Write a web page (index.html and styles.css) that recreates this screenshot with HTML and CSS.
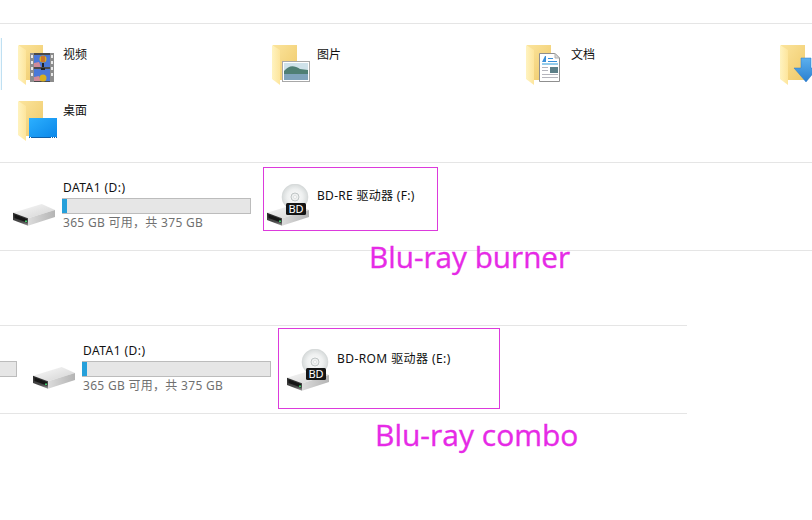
FILE: index.html
```html
<!DOCTYPE html>
<html lang="zh-CN">
<head>
<meta charset="utf-8">
<title>Drives</title>
<link rel="stylesheet" href="styles.css">
</head>
<body>
<svg class="defs" width="0" height="0" aria-hidden="true">
  <defs>
    <linearGradient id="fback" x1="0" y1="0" x2="1" y2="1"><stop offset="0" stop-color="#fbe49c"/><stop offset="1" stop-color="#efc969"/></linearGradient>
    <linearGradient id="fflap" x1="0" y1="0" x2="1" y2="0"><stop offset="0" stop-color="#fff3c0"/><stop offset="1" stop-color="#fde59c"/></linearGradient>
    <linearGradient id="top" x1="0" y1="0" x2="1" y2="1"><stop offset="0" stop-color="#fafafa"/><stop offset="1" stop-color="#d2d2d2"/></linearGradient>
    <linearGradient id="side" x1="0" y1="0" x2="1" y2="0"><stop offset="0" stop-color="#dcdcdc"/><stop offset="1" stop-color="#b4b4b4"/></linearGradient>
    <linearGradient id="panel" x1="0" y1="0" x2="0" y2="1"><stop offset="0" stop-color="#2a2a2a"/><stop offset=".7" stop-color="#4a4a4a"/><stop offset="1" stop-color="#9a9a9a"/></linearGradient>
    <linearGradient id="sky" x1="0" y1="0" x2="1" y2="1"><stop offset="0" stop-color="#2cb0ff"/><stop offset="1" stop-color="#0a86e8"/></linearGradient>
    <radialGradient id="disc"><stop offset="0" stop-color="#fdfdfd"/><stop offset=".6" stop-color="#eef0f0"/><stop offset="1" stop-color="#d6dada"/></radialGradient>
    <linearGradient id="arrow" x1="0" y1="0" x2="0" y2="1"><stop offset="0" stop-color="#5cb0ee"/><stop offset="1" stop-color="#2a7fd0"/></linearGradient>
    <symbol id="folder" viewBox="0 0 44 44">
      <path d="M1 1H25V36H1Z" fill="url(#fback)"/>
      <path d="M0 1L8 6V41L0 35Z" fill="url(#fflap)"/>
    </symbol>
    <symbol id="drive" viewBox="0 0 44 24">
      <path d="M0 9.700L28.700 1L42 7L15 15.300Z" fill="url(#top)"/>
      <path d="M15 15.300L42 7V14L15 22.700Z" fill="url(#side)"/>
      <path d="M0 9.700L15 15.300V22.700L0 17Z" fill="url(#panel)"/>
      <path d="M1.500 11.500L14 16V19.500L1.500 15Z" fill="#161616"/>
      <rect x="12" y="17.500" width="2" height="1.500" fill="#3fd06a"/>
    </symbol>
  </defs>
</svg>

<main class="page">
  <div class="spacer-top"></div>

  <section class="folders">
    <span class="sliver"></span>
    <div class="tile">
      <svg class="ficon" viewBox="0 0 44 44">
        <use href="#folder" width="44" height="44"/>
        <rect x="12" y="9" width="24" height="29" fill="#4a4a4a"/>
        <rect x="12" y="9" width="4" height="29" fill="#8c8c8c"/>
        <rect x="32" y="9" width="4" height="29" fill="#8c8c8c"/>
        <path d="M13 11h2v3h-2zM13 17h2v3h-2zM13 23h2v3h-2zM13 29h2v3h-2zM33 11h2v3h-2zM33 17h2v3h-2zM33 23h2v3h-2zM33 29h2v3h-2z" fill="#e8e8e8"/>
        <rect x="16" y="11" width="16" height="12" fill="#4a78d8"/>
        <rect x="16" y="25" width="16" height="12" fill="#4a78d8"/>
        <path d="M16 19l5-1 2 5h-7zM16 33l5-1 2 5h-7z" fill="#d08a9a"/>
        <circle cx="25" cy="15" r="3.500" fill="#d8b020"/>
        <path d="M23.500 12h1v6h-1zM25.500 12h1v6h-1z" fill="#c03a3a"/>
        <path d="M24 19h2v4h-2zM23 24h4v2h-4z" fill="#222"/>
        <circle cx="25" cy="34" r="3.500" fill="#d8b020"/>
      </svg>
      <span class="label">视频</span>
    </div>
    <div class="tile">
      <svg class="ficon" viewBox="0 0 44 44">
        <use href="#folder" width="44" height="44"/>
        <rect x="10.500" y="17.500" width="27" height="20" fill="#fff" stroke="#a8a8a8"/>
        <rect x="12" y="19" width="24" height="17" fill="#cfe2ea"/>
        <path d="M12 27C17 21 22 21 28 25L36 26V30H12Z" fill="#4f7f74"/>
        <rect x="12" y="30" width="24" height="6" fill="#7fa3bb"/>
      </svg>
      <span class="label">图片</span>
    </div>
    <div class="tile">
      <svg class="ficon" viewBox="0 0 44 44">
        <use href="#folder" width="44" height="44"/>
        <path d="M13.500 9.500H29L33.500 14V37.500H13.500Z" fill="#fff" stroke="#8f8f8f"/>
        <path d="M29 9.500V14H33.500Z" fill="#dcdcdc" stroke="#b0b0b0"/>
        <path d="M16 18l3-6h1v6zM22 14h5v1h-5zM22 17h9v1h-9z" fill="#3a8fd8"/>
        <rect x="16" y="19.500" width="16" height="1" fill="#2a9ad8"/>
        <rect x="24" y="23" width="8" height="6" fill="#5c7f88"/>
        <path d="M16 23h6v1h-6zM16 26h6v1h-6zM16 30h16v1H16zM16 33h16v1H16z" fill="#b5b5bd"/>
      </svg>
      <span class="label">文档</span>
    </div>
    <div class="tile">
      <svg class="ficon" viewBox="0 0 44 44">
        <use href="#folder" width="44" height="44"/>
        <path d="M21 14H31V24H37.500L26 38L14 24H21Z" fill="url(#arrow)" stroke="#2a78c8" stroke-width=".5"/>
      </svg>
    </div>
    <div class="tile">
      <svg class="ficon" viewBox="0 0 44 44">
        <use href="#folder" width="44" height="44"/>
        <rect x="11" y="18" width="28" height="20" fill="url(#sky)"/>
        <rect x="11" y="37" width="28" height="1" fill="#0f5fa8"/>
        <path d="M12 37h1v1h-1zM33 37h1v1h-1zM35 37h1v1h-1zM37 37h1v1h-1z" fill="#fff"/>
      </svg>
      <span class="label">桌面</span>
    </div>
  </section>

  <section class="drives">
    <div class="drive">
      <svg class="dicon"><use href="#drive" width="44" height="24"/></svg>
      <div class="info">
        <div class="name">DATA1 (D:)</div>
        <div class="bar"><div class="fill"></div></div>
        <div class="size">365 GB 可用，共 375 GB</div>
      </div>
    </div>
    <div class="box box-re">
      <svg class="bdicon" viewBox="0 0 44 44">
        <circle cx="28" cy="13" r="13" fill="url(#disc)" stroke="#cfd3d3" stroke-width=".5"/>
        <circle cx="28" cy="13" r="4" fill="#eef0f0" stroke="#bfc5c5"/>
        <circle cx="28" cy="13" r="1.500" fill="#fff" stroke="#c8cccc" stroke-width=".5"/>
        <use href="#drive" y="19" width="44" height="24"/>
        <rect x="19" y="19" width="20" height="12" rx="1.500" fill="#151515"/>
        <text class="bdtext" x="29" y="29" text-anchor="middle">BD</text>
      </svg>
      <div class="name boxname">BD-RE 驱动器 (F:)</div>
    </div>
  </section>

  <div class="spacer-mid"></div>

  <section class="drives drives-narrow">
    <div class="bar stub"></div>
    <div class="drive">
      <svg class="dicon"><use href="#drive" width="44" height="24"/></svg>
      <div class="info">
        <div class="name">DATA1 (D:)</div>
        <div class="bar"><div class="fill"></div></div>
        <div class="size">365 GB 可用，共 375 GB</div>
      </div>
    </div>
    <div class="box box-rom">
      <svg class="bdicon" viewBox="0 0 44 44">
        <circle cx="28" cy="13" r="13" fill="url(#disc)" stroke="#cfd3d3" stroke-width=".5"/>
        <circle cx="28" cy="13" r="4" fill="#eef0f0" stroke="#bfc5c5"/>
        <circle cx="28" cy="13" r="1.500" fill="#fff" stroke="#c8cccc" stroke-width=".5"/>
        <use href="#drive" y="19" width="44" height="24"/>
        <rect x="19" y="19" width="20" height="12" rx="1.500" fill="#151515"/>
        <text class="bdtext" x="29" y="29" text-anchor="middle">BD</text>
      </svg>
      <div class="name boxname">BD-ROM 驱动器 (E:)</div>
    </div>
  </section>

  <div class="note note-burner">Blu-ray burner</div>
  <div class="note note-combo">Blu-ray combo</div>
</main>
</body>
</html>
```

FILE: styles.css
```css
* { box-sizing: border-box; }
html, body { margin: 0; padding: 0; background: #fff; }
body { font-family: "Noto Sans", "Noto Sans CJK SC", sans-serif; font-size: 12px; color: #1a1a1a; }
.defs { position: absolute; }
.page { position: relative; width: 812px; height: 520px; overflow: hidden; }

.spacer-top { height: 23px; }
.spacer-mid { height: 74px; }

.folders {
  position: relative;
  height: 139px;
  padding: 20px 0 0 18px;
  border-top: 1px solid #e5e5e5;
  display: grid;
  grid-template-columns: repeat(4, 254px);
  grid-auto-rows: 56px;
}
.sliver {
  position: absolute;
  left: 0; top: 14px;
  width: 2px; height: 52px;
  background: #f4fafd;
  border-right: 1px solid #bfe0f2;
}
.tile { display: flex; align-items: flex-start; gap: 1px; }
.ficon { width: 44px; height: 44px; flex: none; }
.label { line-height: 22px; color: #111; white-space: nowrap; }

.drives {
  display: flex;
  align-items: flex-start;
  height: 89px;
  padding-left: 13px;
  border-top: 1px solid #e5e5e5;
  border-bottom: 1px solid #e5e5e5;
}
.drives-narrow { width: 687px; padding-left: 0; }

.drive { display: flex; align-items: flex-start; gap: 5px; flex: none; }
.dicon { width: 44px; height: 24px; margin-top: 40px; flex: none; }
.info { width: 189px; padding-top: 15px; }
.name { line-height: 20px; margin-left: 1px; color: #111; white-space: nowrap; letter-spacing: .45px; }
.bar { height: 16px; background: #e6e6e6; border: 1px solid #bcbcbc; }
.fill { width: 5px; height: 14px; margin-left: -1px; background: #26a0da; }
.size { line-height: 17px; margin-left: 1px; color: #707070; white-space: nowrap; letter-spacing: .3px; }
.stub { width: 17px; flex: none; margin: 35px 16px 0 0; border-left: 0; }

.box { display: flex; align-items: flex-start; gap: 6px; flex: none; border: 1px solid #dc3adc; }
.box-re { width: 175px; height: 64px; margin: 4px 0 0 12px; padding: 16px 0 0 3px; }
.box-rom { width: 222px; height: 81px; margin: 2px 0 0 7px; padding: 20px 0 0 8px; }
.bdicon { width: 44px; height: 44px; flex: none; }
.bdtext { font-family: "Noto Sans", sans-serif; font-size: 11px; fill: #fff; }
.boxname { margin: 2px 0 0; letter-spacing: .3px; }
.box-rom .boxname { margin-top: 0; letter-spacing: .42px; }

.note { position: absolute; font-family: "Open Sans", sans-serif; font-size: 29.700px; line-height: 40px; color: #e62ae6; white-space: nowrap; -webkit-text-stroke: .35px #e62ae6; }
.note-burner { left: 369px; top: 237px; }
.note-combo { left: 375px; top: 415px; font-size: 30px; }
```
